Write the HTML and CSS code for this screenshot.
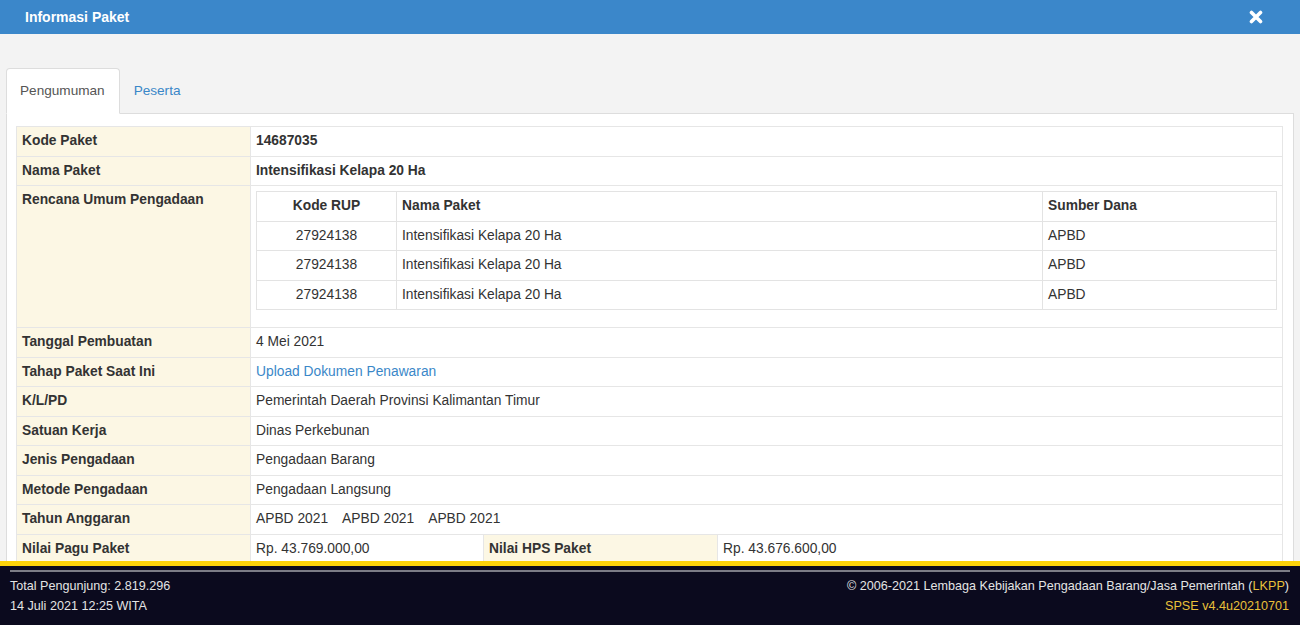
FILE: index.html
```html
<!DOCTYPE html>
<html lang="id">
<head>
<meta charset="utf-8">
<title>Informasi Paket</title>
<link rel="stylesheet" href="styles.css">
</head>
<body>
<div class="page">
  <div class="modal-header">
    <span class="modal-title">Informasi Paket</span>
    <span class="close" aria-label="Tutup">
      <svg width="14" height="14" viewBox="0 0 14 14"><path d="M2.5 2.5 L11.5 11.5 M11.5 2.5 L2.5 11.5" stroke="#fff" stroke-width="3.6" stroke-linecap="round"/></svg>
    </span>
  </div>
  <div class="modal-body">
    <ul class="tabs">
      <li class="tab active">Pengumuman</li>
      <li class="tab"><a href="#">Peserta</a></li>
    </ul>
    <div class="tab-panel">
      <table class="info">
        <colgroup><col class="c1"><col class="c2"><col class="c3"><col class="c4"></colgroup>
        <tr><th>Kode Paket</th><td colspan="3" class="strong">14687035</td></tr>
        <tr><th>Nama Paket</th><td colspan="3" class="strong">Intensifikasi Kelapa 20 Ha</td></tr>
        <tr><th>Rencana Umum Pengadaan</th>
          <td colspan="3">
            <table class="rup">
              <colgroup><col class="r1"><col class="r2"><col class="r3"></colgroup>
              <tr><th class="center">Kode RUP</th><th>Nama Paket</th><th>Sumber Dana</th></tr>
              <tr><td class="center">27924138</td><td>Intensifikasi Kelapa 20 Ha</td><td>APBD</td></tr>
              <tr><td class="center">27924138</td><td>Intensifikasi Kelapa 20 Ha</td><td>APBD</td></tr>
              <tr><td class="center">27924138</td><td>Intensifikasi Kelapa 20 Ha</td><td>APBD</td></tr>
            </table>
          </td></tr>
        <tr><th>Tanggal Pembuatan</th><td colspan="3">4 Mei 2021</td></tr>
        <tr><th>Tahap Paket Saat Ini</th><td colspan="3"><a href="#">Upload Dokumen Penawaran</a></td></tr>
        <tr><th>K/L/PD</th><td colspan="3">Pemerintah Daerah Provinsi Kalimantan Timur</td></tr>
        <tr><th>Satuan Kerja</th><td colspan="3">Dinas Perkebunan</td></tr>
        <tr><th>Jenis Pengadaan</th><td colspan="3">Pengadaan Barang</td></tr>
        <tr><th>Metode Pengadaan</th><td colspan="3">Pengadaan Langsung</td></tr>
        <tr><th>Tahun Anggaran</th><td colspan="3"><span class="year">APBD 2021</span><span class="year">APBD 2021</span><span class="year">APBD 2021</span></td></tr>
        <tr><th>Nilai Pagu Paket</th><td>Rp. 43.769.000,00</td><th>Nilai HPS Paket</th><td>Rp. 43.676.600,00</td></tr>
      </table>
    </div>
  </div>
  <footer class="footer">
    <div class="footer-line"></div>
    <div class="footer-row">
      <div class="footer-left">
        <div>Total Pengunjung: 2.819.296</div>
        <div>14 Juli 2021 12:25 WITA</div>
      </div>
      <div class="footer-right">
        <div>&copy; 2006-2021 Lembaga Kebijakan Pengadaan Barang/Jasa Pemerintah (<span class="gold">LKPP</span>)</div>
        <div class="gold">SPSE v4.4u20210701</div>
      </div>
    </div>
  </footer>
</div>
</body>
</html>
```

FILE: styles.css
```css
* { box-sizing: border-box; }
html, body { margin: 0; padding: 0; }
body {
  font-family: "Liberation Sans", Arial, sans-serif;
  font-size: 13.8px;
  color: #333;
  background: #f3f3f3;
}
.page {
  height: 625px;
  display: flex;
  flex-direction: column;
  overflow: hidden;
}
.modal-header {
  height: 34px;
  flex: none;
  background: #3b87ca;
  display: flex;
  align-items: center;
  justify-content: space-between;
  padding: 0 37px 0 25px;
}
.modal-title {
  color: #fff;
  font-weight: bold;
  font-size: 14px;
}
.close { display: flex; }
.modal-body {
  flex: 1;
  min-height: 0;
  overflow: hidden;
  padding: 34px 6px 0 6px;
}
.tabs {
  list-style: none;
  margin: 0;
  padding: 0;
  display: flex;
  border-bottom: 1px solid #ddd;
}
.tab {
  padding: 12px 14px 12px 13px;
  line-height: 20px;
  font-size: 13.6px;
  border: 1px solid transparent;
  border-radius: 4px 4px 0 0;
  margin-bottom: -1px;
  color: #555;
}
.tab.active {
  background: #fff;
  border-color: #ddd #ddd transparent #ddd;
}
.tab a { color: #3a87c8; text-decoration: none; }
.tab-panel {
  background: #fff;
  border: 1px solid #ddd;
  border-top: 0;
  padding: 12px 10px 20px 9px;
}
table { border-collapse: collapse; }
.info {
  width: 100%;
  table-layout: fixed;
}
.info col.c1 { width: 234px; }
.info col.c2 { width: 233px; }
.info col.c3 { width: 234px; }
.info > tbody > tr > th,
.info > tbody > tr > td {
  border: 1px solid #e6e6e6;
  padding: 5px;
  line-height: 18.5px;
  text-align: left;
  vertical-align: top;
}
.info > tbody > tr > th {
  background: #fcf7e4;
  font-weight: bold;
  color: #333;
}
.info td.strong { font-weight: bold; }
.info a { color: #3a87c8; text-decoration: none; }
.year { margin-right: 14px; }
.rup {
  width: 100%;
  table-layout: fixed;
  margin-bottom: 12px;
}
.rup col.r1 { width: 140px; }
.rup col.r3 { width: 234px; }
.rup th, .rup td {
  border: 1px solid #e3e3e3;
  padding: 5px;
  line-height: 18.5px;
  text-align: left;
}
.rup th { font-weight: bold; }
.rup .center { text-align: center; }
.footer {
  flex: none;
  height: 64px;
  background: #0b0a1e;
  border-top: 5px solid #fcd20a;
  padding: 4px 11px 0 10px;
  color: #e4e4e4;
  font-size: 12.6px;
}
.footer-line {
  height: 2px;
  background: #7c7c86;
  margin-bottom: 4px;
  margin-right: -1px;
}
.footer-row {
  display: flex;
  justify-content: space-between;
  line-height: 20px;
}
.footer-right { text-align: right; }
.gold { color: #e9c03a; }
```
